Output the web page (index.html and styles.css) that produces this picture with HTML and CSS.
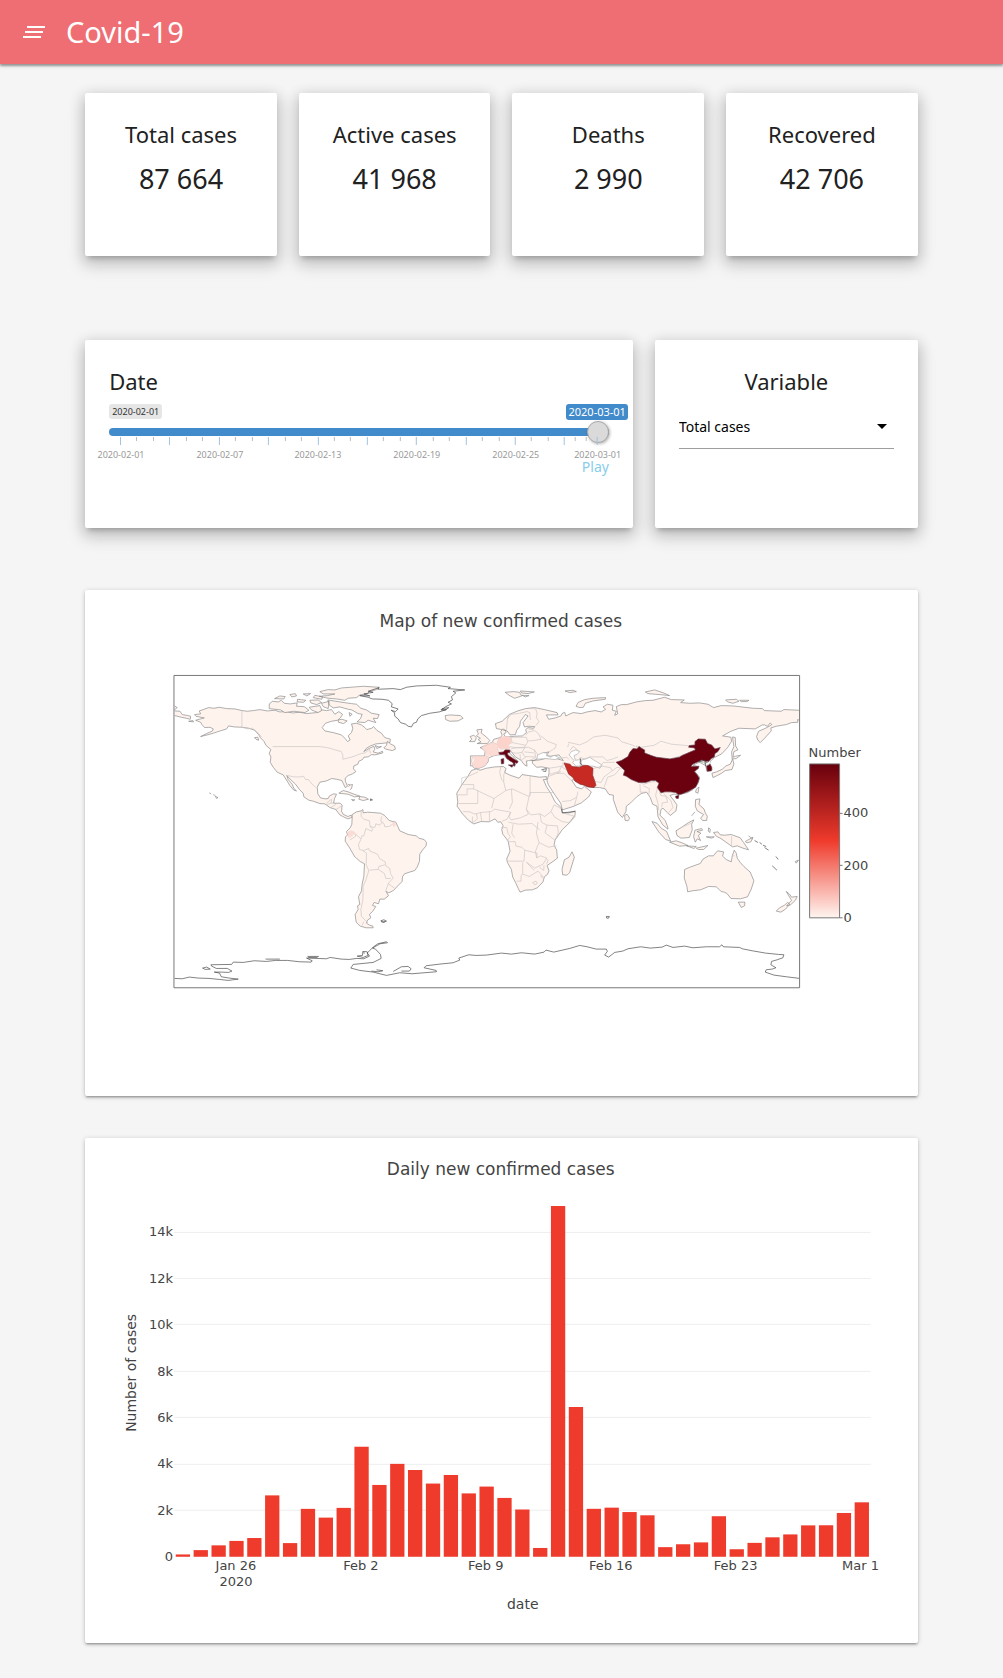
FILE: index.html
```html
<!DOCTYPE html>
<html lang="en">
<head>
<meta charset="utf-8">
<meta name="viewport" content="width=device-width, initial-scale=1">
<title>Covid-19</title>
<link rel="stylesheet" href="styles.css">
</head>
<body>
<header class="navbar">
  <button class="menu-button" type="button" aria-label="Menu">
    <svg width="24" height="14" viewBox="0 0 24 14"><path d="M5 2h18M3 7h18M1 12h18"/></svg>
  </button>
  <h1 class="brand">Covid-19</h1>
</header>
<main class="container">
  <section class="grid stats">
    <article class="card stat"><h2>Total cases</h2><p>87 664</p></article>
    <article class="card stat"><h2>Active cases</h2><p>41 968</p></article>
    <article class="card stat"><h2>Deaths</h2><p>2 990</p></article>
    <article class="card stat"><h2>Recovered</h2><p>42 706</p></article>
  </section>

  <section class="grid controls">
    <div class="card control date-card">
      <h2><label for="date">Date</label></h2>
      <div class="slider-labels"><span class="from">2020-02-01</span><output class="current" for="date">2020-03-01</output></div>
      <input class="slider" id="date" type="range" min="0" max="29" value="29">
      <svg class="ticks" viewBox="0 0 500 25">
        <path class="minor" d="M27.500 0v4M44.500 0v4M77.500 0v4M93.500 0v4M126.500 0v4M143.500 0v4M176.500 0v4M192.500 0v4M225.500 0v4M241.500 0v4M274.500 0v4M291.500 0v4M324.500 0v4M340.500 0v4M373.500 0v4M390.500 0v4M422.500 0v4M439.500 0v4M466.500 0v4M477.500 0v4"/>
        <path class="major" d="M11.500 0v8M60.500 0v8M110.500 0v8M159.500 0v8M209.500 0v8M258.500 0v8M307.500 0v8M357.500 0v8M406.500 0v8M455.500 0v8M488.500 0v8"/>
        <g class="tick-text"><text x="12" y="21">2020-02-01</text><text x="111" y="21">2020-02-07</text><text x="209" y="21">2020-02-13</text><text x="308" y="21">2020-02-19</text><text x="407" y="21">2020-02-25</text><text x="489" y="21">2020-03-01</text></g>
      </svg>
      <a class="play" href="#date">Play</a>
    </div>
    <div class="card control variable-card">
      <h2><label for="variable">Variable</label></h2>
      <div class="select-wrap">
        <select id="variable"><option>Total cases</option><option>Active cases</option><option>Deaths</option><option>Recovered</option></select>
        <svg class="caret" width="10" height="5" viewBox="0 0 10 5"><path d="M0 0h10L5 5z"/></svg>
      </div>
    </div>
  </section>

  <section class="card plot">
    <svg viewBox="0 0 833 506" role="img" aria-label="Map of new confirmed cases">
      <defs>
        <linearGradient id="reds" x1="0" y1="1" x2="0" y2="0"><stop offset="0" stop-color="#fff5f0"/><stop offset=".5" stop-color="#ef3b2c"/><stop offset="1" stop-color="#67000d"/></linearGradient>
        <clipPath id="frame"><path d="M43 46H1920V984H43z"/></clipPath>
      </defs>
      <text class="plot-title" x="416" y="37">Map of new confirmed cases</text>
      <g transform="translate(75 70) scale(.3333)" clip-path="url(#frame)">
        <!-- The Americas -->
        <g class="land">
          <path d="M118 153L130 149 146 143 162 145 178 142 200 146 225 147 247 152 262 154 280 152 300 149 322 153 345 151 360 156 380 155 398 159 420 157 440 161 470 158 488 150 500 152 515 149 525 163 537 155 548 163 543 172 533 181 515 184 497 190 487 203 495 213 520 218 545 225 555 235 563 245 571 240 565 228 575 218 579 205 575 192 590 190 605 195 615 203 621 209 636 205 641 200 652 212 665 220 675 233 692 238 690 248 670 250 648 252 632 258 620 265 612 275 625 267 642 259 645 268 640 276 655 280 668 274 669 279 645 285 635 284 625 291 612 292 608 299 597 304 594 313 582 318 581 327 588 335 578 342 565 347 556 355 557 365 563 379 556 383 550 370 546 362 530 358 515 356 500 363 480 367 472 382 474 402 482 414 497 417 505 416 509 408 521 402 530 403 524 416 521 430 541 430 547 436 545 454 550 463 564 470 574 466 578 472 564 477 553 472 540 465 528 449 510 443 495 432 480 431 460 424 447 421 432 411 430 400 418 388 407 373 391 358 381 347 385 359 397 373 402 386 410 393 402 391 390 377 384 367 370 345 352 337 340 322 331 307 333 291 328 280 333 269 318 256 312 244 302 234 296 224 284 211 267 205 246 202 223 201 206 198 200 207 181 213 160 220 142 225 122 230 140 221 158 213 160 207 150 202 134 203 126 194 122 187 107 181 133 174 108 169 104 164 122 162z"/>
          <path d="M480 95L505 89 525 90 545 84 585 81 610 79 658 82 650 89 628 95 624 101 600 105 590 113 565 115 555 121 530 117 505 115 478 109 503 107 525 102 490 102zM504 120L528 124 560 129 575 131 590 133 603 145 620 150 635 160 658 164 653 176 640 175 648 188 625 181 615 188 592 186 602 176 607 163 595 161 576 150 565 148 540 141 520 144 508 135zM328 132L338 124 355 126 364 121 373 130 391 132 412 129 410 139 433 140 447 151 435 158 402 154 375 158 362 150 328 146zM344 116L360 108 376 110 372 117zM390 104L406 101 410 108 396 111zM430 102L452 101 441 108zM450 121L475 120 485 128 470 134 453 129zM448 142L480 137 486 151 475 158 455 150zM485 130L508 124 505 146 490 140zM535 180L546 178 562 183 551 191 536 187zM568 158L577 163 570 169zM413 118L438 121 431 127 412 126zM465 106L488 111 486 118 460 113zM44 138L52 143 43 150M44 153L60 154 67 164 79 166 92 169 91 178 79 175 64 172 44 167M86 184L99 182 101 186zM284 233L294 232 296 241 288 238zM672 264L680 256 683 244 692 252 704 258 707 268 697 272 679 268zM646 257L657 261 665 260 651 266z"/>
          <path d="M537 400L550 392 565 396 580 402 600 409 584 411 565 403 545 401zM597 418L600 410 615 412 626 418 610 422zM575 419L585 420 579 423zM564 373L571 375 578 374 575 386 570 390M570 376L566 380M148 399L154 402M160 405L166 406M166 409L174 413 170 416z"/>
          <path d="M577 474L577 464 590 456 604 453 609 449 610 459 623 457 639 458 662 460 673 466 681 474 688 482 708 487 714 500 720 513 745 524 770 528 777 535 793 539 800 548 799 558 788 571 780 583 779 605 772 622 765 632 749 637 734 642 728 651 727 665 714 678 701 692 687 699 679 695 686 708 673 718 660 718 656 732 643 728 638 737 648 740 639 754 629 764 633 774 623 781 620 790 629 796 639 799 640 804 619 804 601 799 589 787 586 764 595 749 593 738 600 734 596 711 605 693 607 672 612 650 614 612 601 605 584 590 570 565 556 544 557 531 563 525 560 515 571 504 576 493z"/>
        </g>
        <path class="border" d="M246 152V202L263 207 278 205 292 216 305 231M338 260H480L500 263 510 265 530 271 544 275 549 285 549 298 574 292 588 287 603 281 616 279 629 268 632 280M378 346L402 351 422 351 431 349 437 359 446 359 454 370 468 383M500 430L515 418 514 430 500 434M514 430H525M513 443L529 433M527 450L547 437M604 454L604 470 612 478 629 483 631 500 639 508 636 514 618 506 612 528 606 528 603 539 596 554 599 569 611 572 627 566 629 573 653 583 659 596 676 606 678 618 690 626 692 641 700 655 686 670 677 695M609 572L620 580 619 615 627 632 619 658 610 680 609 721 603 750 605 770 624 789M629 631L655 629 657 620 675 615M656 629L674 641 678 656 693 656M564 521L583 517 588 529 570 540M587 522L603 537M630 500L645 503 648 492 660 496 669 485M665 470L663 485 673 492 675 501 690 499 706 487M686 672L704 685M607 797L612 785"/>
        <path fill="#fbdcd5" d="M697 487H706L708 496 701 502zM563 516L574 511 587 517 579 528 566 535z"/>
        <path class="outline" d="M658 83L654 88 700 86 722 89 740 82 770 78 830 76 872 82 865 86 915 90 880 94 888 99 875 110 878 120 865 127 875 132 858 140 845 150 860 149 838 156 810 160 785 167 774 177 770 187 761 190 755 201 745 199 738 193 722 188 715 177 705 169 704 158 694 151 707 155 715 147 695 141 697 131 686 121 667 118 637 117 625 112 600 107 630 108 612 102 640 97 625 94zM847 146L867 143 855 151 844 149zM663 783L672 780 680 784 670 788zM664 786H676M632 417L638 420 632 422z"/>

        <!-- Europe, Africa and Asia -->
        <g transform="translate(720 0)">
          <g class="land">
            <path d="M212 288L235 288 254 288 256 275 250 268 241 263 258 257 268 252 278 247 282 238 302 233 307 226 303 215 309 207 317 211 319 218 312 222 316 230 327 231 345 229 368 228 380 218 378 209 385 203 402 205 405 200 387 199 374 201 370 188 385 168 377 164 362 184 360 199 351 211 347 224 331 225 322 213 306 209 290 206 287 191 307 184 330 163 354 153 378 146 405 143 434 149 472 158 475 165 440 165 447 178 466 174 484 168 487 161 495 157 498 168 520 158 545 161 562 156 586 152 605 156 618 148 610 141 623 133 640 136 638 151 650 154 645 166 654 162 650 140 665 134 681 134 710 126 737 122 760 121 795 112 815 119 854 120 843 128 870 130 900 129 925 133 942 143 965 137 1000 138 1060 145 1088 146 1095 152 1145 154 1153 149 1200 151V181L1194 179 1195 187 1176 188 1160 194 1130 199 1114 204 1115 213 1096 234 1082 248 1075 241 1071 230 1077 214 1098 205 1117 194 1112 189 1104 199 1095 195 1088 195 1067 207 1045 206 1018 205 994 214 969 228 994 232 996 244 984 263 966 282 944 293 928 308 930 317 938 330 922 334 918 317 899 307 880 316 894 320 886 335 899 351 897 367 880 389 862 399 838 403 822 403 811 407 822 421 832 435 829 453 812 467 803 458 790 445 784 449 781 466 797 482 804 501 805 508 789 495 775 470 772 439 759 433 752 413 741 397 725 401 711 411 693 429 680 439 679 455 668 473 654 457 641 419 641 406 628 404 617 387 600 383 580 383 562 380 544 371 524 359 516 361 530 382 546 387 554 379 575 396 567 411 545 429 520 440 488 450 483 430 467 407 446 375 442 362 448 340 448 325 427 321 411 322 398 310 398 302 420 300 440 295 463 294 491 302 478 285 453 289 440 287 448 276 429 280 412 297 403 302 387 302 380 304 382 319 373 314 364 301 347 291 332 272 328 277 340 290 355 304 345 317 340 305 323 296 310 284 295 285 281 288 267 294 265 306 254 319 238 325 224 325 217 318 212 318z"/>
            <path d="M229 327L241 331 260 325 285 321 311 320 319 326 315 338 331 346 358 355 367 344 387 347 419 352 440 350 440 359 431 359 440 380 453 400 466 426 484 443 488 459 507 459 527 453 526 466 508 490 488 509 466 541 463 557 471 570 473 595 457 607 442 617 448 633 443 644 434 651 430 666 413 684 398 690 377 691 361 697 356 687 347 667 339 652 335 629 323 608 321 597 331 574 325 543 309 523 306 509 310 497 303 486 294 487 286 477 268 486 244 485 222 492 207 482 189 463 172 439 174 426 171 400 186 375 204 350 215 332zM517 576L524 592 510 638 502 646 489 645 487 628 494 600 508 592z"/>
            <path d="M231 210L247 208 244 219 252 225 264 235 270 242 263 251 232 251 244 246 235 239 242 235 230 228 236 222zM211 230L222 226 230 233 225 245 209 245 216 238zM136 167L151 165 182 167 190 175 175 183 150 184 138 179zM316 97L342 95 359 97 366 108 345 115 331 108zM362 93L404 96 385 101 365 99zM367 106L388 107 377 111zM496 93L520 91 530 95 510 98zM529 139L536 127 555 119 580 115 618 113 617 118 580 123 557 130 551 142 540 143zM737 96L765 90 792 99 810 107 781 104 745 101zM978 120L1010 118 1018 124 1000 130 984 126zM1020 121H1048L1042 125 1025 125z"/>
            <path d="M999 231L1007 233 1008 258 1015 270 1003 275 1000 292 1008 289 1023 286 1010 296 999 297 1003 312 997 329 977 332 966 340 953 347 940 353 937 340 951 336 968 328 979 318 992 313 998 300 996 276 1003 260 1000 241zM890 388L898 382 895 400 888 397zM675 467L682 463 690 475 685 483 676 481z"/>
            <path d="M888 419L901 417 898 434 913 447 917 459 923 469 921 482 909 482 903 475 912 464 893 453 887 439zM876 468L886 456M757 485L772 490 785 505 801 515 813 544 798 539 777 516zM810 547L830 543 850 550 865 557 840 559zM829 513L848 501 867 488 883 480 876 493 878 510 869 533 844 535 832 527zM886 511L906 506 909 511 892 515 904 520 896 527 903 542 893 537 887 547 882 531zM861 558L890 560 883 566zM890 565L925 557 912 569 897 569zM942 518L955 516 962 525 975 526 995 524 1022 534 1032 548 1047 570 1030 565 1013 558 999 561 979 547 964 536 950 529zM1037 545L1060 532 1054 546 1042 549zM1047 528L1060 538M927 504L932 508 931 518 926 514zM920 531L944 531 936 535z"/>
            <path d="M1004 571L1010 580 1013 595 1022 608 1033 620 1052 637 1063 663 1055 688 1044 711 1023 717 994 716 982 701 974 697 965 695 950 681 927 680 903 690 878 693 864 696 862 680 854 655 855 629 871 622 902 611 910 598 927 588 941 588 954 573 972 576 969 589 980 599 995 606 998 588zM1016 727H1036L1035 738 1025 743zM1160 695L1170 703 1176 712 1193 710 1187 722 1173 735 1161 738 1176 722zM1164 728L1171 733 1158 748 1144 757 1130 754 1140 744 1155 736zM1187 605L1197 601 1190 610z"/>
          </g>
          <path class="water" d="M545 301L570 292 585 302 607 315 601 325 581 319 563 318 540 322zM411 298L414 285 430 278 443 280 440 287 453 292 463 286 480 294 466 299 437 296zM508 285L515 275 528 270 540 275 533 283 523 287 527 301 543 299 546 318 529 319 519 308 523 302zM895 307L928 296 933 307 928 315 918 317 914 307z"/>
          <g class="border">
            <path d="M184 374H222V387H202V405H173M186 374V354L204 350 235 336M234 390V431H176M222 387L283 416 318 392 312 366 306 360 300 338 303 321M318 325L312 346 312 366M318 392L337 387 388 410 391 398H460M391 348V409M388 410L380 448 386 463 362 474 334 480 328 471 333 457 284 448 275 455 256 457 241 458 230 462 224 462 210 456 190 455M283 416L276 445M335 388L338 428 329 447M333 457L322 478 307 484M218 470L218 490M242 458L246 485M269 455L269 485M230 461L233 477 216 491M380 448L393 465 421 462 435 470 454 455 463 435M454 455L465 472 487 485 510 489 527 470 488 459M463 435L485 447M421 462L425 487 442 496 473 498 476 518 466 541M442 496L436 519 466 541M415 486L410 520 418 548 446 562 471 558M325 546L346 545 349 559 366 562 375 571 373 604 323 604M375 571L412 580 411 594 423 588 441 595 430 613 405 625 397 619 380 607M411 594L407 575 418 548M305 503H321L325 521 332 531 321 544M326 487L356 493 397 491 420 510M340 493L336 521 345 534M369 608V640L364 649V664L351 664M369 643L389 650 415 634 432 653M380 607L403 632M419 622L432 632 433 616M399 668L409 664 413 671 405 675zM439 595L445 602 441 612M421 648L427 650 427 656"/>
            <path d="M218 291L215 304 220 319M255 288L268 292M278 247L298 256 293 266 299 284M300 230L292 250 297 255M306 209L314 208M318 230L334 233 337 248 323 256 331 263 322 267 300 267M335 232L380 232 384 246 378 256 337 248M350 228L351 231M378 226L386 216 405 212 417 222 424 238 400 242 384 243M405 200L400 209 386 207M323 177L334 163 355 161 382 155 390 158 392 180M329 162L323 178 320 212M390 145L408 147 412 161 410 173 418 185 408 197M378 256L374 262 350 264 331 260M333 268L349 263 375 264 367 277 352 280 335 278M367 277L375 290 408 291 404 270 386 262 374 263M404 270L415 285M361 282L362 299M378 292L365 300M408 293L391 301 379 303M374 276L402 279M423 227L443 244 470 254 466 265 448 276M479 296L501 292 508 299M490 307L490 318 474 321 448 325M447 344L478 335 485 320 505 333M472 341L493 340 516 363M484 335L449 349M487 425L513 422 531 412 535 395M531 412L524 439M505 247L540 255 561 246 582 231 616 226 655 234 665 245 699 256 707 260M504 262L507 251M511 272L520 259 537 273M570 291L610 291 622 302 640 297 655 291M570 291L558 298 540 292M599 322L611 308 645 307M583 325L608 319 632 323 638 332 613 351 604 368 578 363M638 333L652 322 670 326M613 383L624 352 645 345 663 324M680 345L731 373 757 366 774 365M721 373L722 397 741 397M731 378L749 386 748 403M709 258L726 262 764 256 784 244 816 253 863 257 888 262M709 259L728 278 766 292 811 298 856 284 885 270M773 386L768 407 775 430 777 451M779 397L784 407 799 409 804 427 788 429 786 442M792 401L814 422 820 443 807 458M848 502L876 489M996 529V560M1003 585V590"/>
          </g>
          <path class="cases-low" d="M295 238L312 228 331 231 337 248 324 255 330 262 324 267 298 266 292 252z"/>
          <path class="cases-low" d="M218 288L256 288 269 292 264 305 255 319 238 325 225 324 217 312 223 300zM250 256L278 247 298 256 294 269 299 284 282 288 257 287 257 276 247 267z" opacity=".75"/>
          <path class="cases-mid" d="M493 309L511 313 517 320 540 322 552 316 565 317 580 325 579 346 584 360 589 376 583 383 565 381 554 376 541 373 526 364 519 352 507 343z"/>
          <path class="cases-high" d="M649 307L665 302 685 290 690 278 700 266 712 267 718 260 727 266 735 270 735 279 755 287 770 292 811 297 839 292 849 286 875 275 887 270 885 264 867 262 869 257 886 255 886 245 896 237 917 238 924 251 936 255 946 267 962 263 955 275 946 281 944 291 935 296 928 303 918 305 907 300 894 306 879 313 874 320 898 319 896 326 884 335 892 344 899 355 894 371 888 382 867 394 845 403 835 404 829 398 812 396 796 396 784 399 773 383 778 370 768 362 755 362 738 368 717 368 695 359 680 349 671 346 675 332 665 322zM828 409L838 406 836 416 829 415zM921 319L932 313 937 324 935 333 923 334zM297 278L311 276 316 270 330 270 331 277 323 279 325 286 342 297 355 305 352 310 346 308 345 319 340 317 341 309 331 303 321 296 315 284 300 284zM304 298L312 296 312 311 305 312zM326 315H340L337 322z"/>
          <path class="outline" d="M425 330L440 326 438 335 429 333M540 296L543 297 541 310 549 316M486 447L488 459 526 455M897 306L916 301 918 319M917 310L929 304M620 770H629L627 775H621zM1065 542L1075 548M1080 548L1087 553M1090 556L1100 560M1095 563L1107 571M1129 590L1136 599M1118 618L1132 631"/>
        </g>
        <path class="outline" d="M43 956L67 957 88 952 115 955 147 956 178 959 205 962 235 958 208 955 184 951 179 940 163 937 184 937 206 938 216 934 202 926 169 926 155 919 153 915 215 914 220 907 250 908 283 903 320 905 347 902 383 902 419 906 454 907 457 903 440 895 500 897 511 893 544 898 568 899 591 896 612 897 629 889 622 880 640 862 654 852 680 846 683 849 661 852 638 865 647 868 662 884 664 896 640 908 580 914 573 925 600 932 640 937 680 947 720 939 757 942 830 936 829 932 793 924 799 918 840 913 880 909 900 901 897 895 927 885 948 887 980 886 1025 880 1055 883 1085 879 1125 883 1153 877 1159 871 1182 877 1204 872 1230 866 1260 857 1282 861 1310 868 1340 868 1343 875 1335 886 1347 892 1365 878 1389 874 1405 867 1443 861 1472 865 1508 862 1520 856 1540 863 1575 859 1600 864 1640 861 1680 861 1687 855 1691 861 1740 863 1748 867 1778 873 1818 880 1857 884 1873 885 1870 894 1853 900 1836 905 1834 915 1849 924 1838 928 1820 930 1817 937 1843 946 1880 951 1920 956"/>
        <path class="outline" d="M128 925L140 922 151 928 136 929zM317 898H360M443 890H477M445 893H473M592 889L608 887 609 875 622 876 625 887 610 893zM635 934L655 936 669 933 650 930M700 935L725 921 745 920 754 927 749 934 725 934M615 880L610 879"/>
      </g>
      <path class="plot-frame" d="M89 85.500H715V398H89z"/>
      <g class="axis-text">
        <text class="legend-title" x="724" y="167">Number</text>
        <text x="759" y="332">0</text><text x="759" y="280">200</text><text x="759" y="227">400</text>
      </g>
      <path fill="url(#reds)" class="colorbar" d="M725 174H755V328H725z"/>
      <path class="colorbar-ticks" d="M755 223.500h3M755 275.500h3M755 328h3"/>
    </svg>
  </section>

  <section class="card plot">
    <svg viewBox="0 0 833 506" role="img" aria-label="Daily new confirmed cases">
      <text class="plot-title" x="416" y="37">Daily new confirmed cases</text>
      <path class="gridlines" d="M89 94.500H786M89 140.500H786M89 186.500H786M89 233.500H786M89 279.500H786M89 326.500H786M89 372.500H786"/>
      <g class="axis-text y-axis">
        <text x="88" y="98">14k</text><text x="88" y="145">12k</text><text x="88" y="191">10k</text><text x="88" y="238">8k</text><text x="88" y="284">6k</text><text x="88" y="330">4k</text><text x="88" y="377">2k</text><text x="88" y="423">0</text>
      </g>
      <!-- One unit across is a day, one unit up is a case -->
      <g class="bars" transform="translate(90.800 419) scale(17.876 -.02318)">
        <rect x="0" width=".8" height="100"/><rect x="1" width=".8" height="287"/><rect x="2" width=".8" height="493"/><rect x="3" width=".8" height="684"/><rect x="4" width=".8" height="809"/><rect x="5" width=".8" height="2650"/><rect x="6" width=".8" height="590"/><rect x="7" width=".8" height="2068"/><rect x="8" width=".8" height="1690"/><rect x="9" width=".8" height="2110"/>
        <rect x="10" width=".8" height="4750"/><rect x="11" width=".8" height="3100"/><rect x="12" width=".8" height="4010"/><rect x="13" width=".8" height="3745"/><rect x="14" width=".8" height="3160"/><rect x="15" width=".8" height="3530"/><rect x="16" width=".8" height="2735"/><rect x="17" width=".8" height="3030"/><rect x="18" width=".8" height="2540"/><rect x="19" width=".8" height="2040"/>
        <rect x="20" width=".8" height="380"/><rect x="21" width=".8" height="15140"/><rect x="22" width=".8" height="6465"/><rect x="23" width=".8" height="2070"/><rect x="24" width=".8" height="2120"/><rect x="25" width=".8" height="1930"/><rect x="26" width=".8" height="1790"/><rect x="27" width=".8" height="415"/><rect x="28" width=".8" height="540"/><rect x="29" width=".8" height="620"/>
        <rect x="30" width=".8" height="1750"/><rect x="31" width=".8" height="325"/><rect x="32" width=".8" height="600"/><rect x="33" width=".8" height="840"/><rect x="34" width=".8" height="965"/><rect x="35" width=".8" height="1355"/><rect x="36" width=".8" height="1360"/><rect x="37" width=".8" height="1890"/><rect x="38" width=".8" height="2350"/>
      </g>
      <g class="axis-text x-axis">
        <text x="151" y="432">Jan 26</text><text x="151" y="448">2020</text><text x="276" y="432">Feb 2</text><text x="401" y="432">Feb 9</text><text x="526" y="432">Feb 16</text><text x="651" y="432">Feb 23</text><text x="776" y="432">Mar 1</text>
      </g>
      <text class="axis-title" x="438" y="471">date</text>
      <text class="axis-title" transform="translate(51 235) rotate(-90)">Number of cases</text>
    </svg>
  </section>
</main>
</body>
</html>
```
FILE: styles.css
```css
* { box-sizing: border-box; }
body {
  margin: 0;
  background: #f5f5f5;
  color: #212121;
  font-family: "Segoe UI", "Noto Sans", sans-serif;
  line-height: 1.5;
}
h1, h2, p { margin: 0; font-weight: 400; }

.navbar {
  display: flex;
  align-items: center;
  gap: 20px;
  height: 64px;
  padding: 0 22px;
  background: #ee6e73;
  color: #fff;
  box-shadow: 0 2px 2px rgba(0, 0, 0, .3), 0 1px 5px rgba(0, 0, 0, .2);
}
.menu-button { display: flex; width: 24px; padding: 0; border: 0; background: none; }
.menu-button path { fill: none; stroke: #fff; stroke-width: 2; }
.brand { font-size: 29px; line-height: 64px; }

.container {
  display: grid;
  width: 85%;
  margin: 0 auto;
  padding: 29px 10px 34px;
}
.grid { display: grid; grid-template-columns: repeat(12, 1fr); column-gap: 22px; }
.card {
  background: #fff;
  border-radius: 2px;
  box-shadow: 0 8px 17px 2px rgba(0, 0, 0, .14), 0 3px 14px 2px rgba(0, 0, 0, .12), 0 5px 5px -3px rgba(0, 0, 0, .2);
}
.card h2 { font-size: 22px; line-height: 34px; }

.stats { margin-bottom: 84px; }
.stat { grid-column: span 3; min-height: 163px; padding-top: 24px; text-align: center; }
.stat p { font-size: 27px; line-height: 56px; }

.controls { margin-bottom: 62px; }
.control { min-height: 188px; padding: 24px; }
.date-card { grid-column: span 8; display: flex; flex-direction: column; }
.variable-card { grid-column: span 4; }
.variable-card h2 { text-align: center; }

.slider-labels { display: flex; justify-content: space-between; align-items: flex-start; height: 17px; margin: 6px -19px 0 0; }
.from, .current { border-radius: 3px; white-space: nowrap; }
.from { padding: 0 3px; background: #e6e6e6; color: #333; font-size: 9px; line-height: 15px; }
.current { padding: 0 2px; background: #428bca; color: #fff; font-size: 11px; line-height: 16px; }
.slider { appearance: none; width: 100%; height: 22px; margin: 0; background: none; }
.slider::-webkit-slider-runnable-track {
  height: 8px;
  border-radius: 4px;
  background: #428bca;
}
.slider::-webkit-slider-thumb {
  appearance: none;
  width: 22px;
  height: 22px;
  margin-top: -7px;
  border: 1px solid #aaa;
  border-radius: 50%;
  background: #dadada;
  box-shadow: 1px 1px 3px rgba(0, 0, 0, .3);
}
.ticks { display: block; width: 100%; margin-top: -6px; overflow: visible; }
.minor { stroke: #bbb; }
.major { stroke: #9dc3e3; }
.tick-text { fill: #999; font-size: 9px; text-anchor: middle; }
.play { align-self: flex-end; margin-top: -4px; color: #87ceeb; font-size: 14px; line-height: 18px; text-decoration: none; }

.select-wrap { position: relative; margin-top: 6px; }
.select-wrap select {
  appearance: none;
  display: block;
  width: 100%;
  height: 45px;
  padding: 0;
  border: 0;
  border-bottom: 1px solid #9e9e9e;
  border-radius: 0;
  background: none;
  color: #000;
  font: 14px "Segoe UI", "Noto Sans", sans-serif;
}
.caret { position: absolute; top: 20px; right: 7px; pointer-events: none; }

.plot { box-shadow: 0 2px 2px rgba(0, 0, 0, .14), 0 3px 1px -2px rgba(0, 0, 0, .12), 0 1px 5px rgba(0, 0, 0, .2); }
.plot + .plot { margin-top: 42px; }
.plot svg { display: block; width: 100%; font-family: Verdana, "DejaVu Sans", sans-serif; fill: #444; }
.plot-title { font-size: 17px; text-anchor: middle; }
.axis-text { font-size: 13px; }
.y-axis { text-anchor: end; }
.x-axis, .axis-title { text-anchor: middle; }
.axis-title { font-size: 14px; }
.gridlines { stroke: #eee; }
.bars { fill: #ef3b2c; }

.plot-frame, .colorbar, .colorbar-ticks { stroke: #777; }
.plot-frame { fill: none; }
.land { fill: #fff3ee; stroke: #888; stroke-width: 2; }
.border { fill: none; stroke: #c8c5c4; stroke-width: 2; }
.outline { fill: none; stroke: #444; stroke-width: 2; }
.water { fill: #fff; stroke: #aaa; stroke-width: 2; }
.cases-low { fill: #fbd3cb; }
.cases-mid { fill: #c72a23; stroke: #833; stroke-width: 2; }
.cases-high { fill: #6b000e; stroke: #645; stroke-width: 2; }
```
